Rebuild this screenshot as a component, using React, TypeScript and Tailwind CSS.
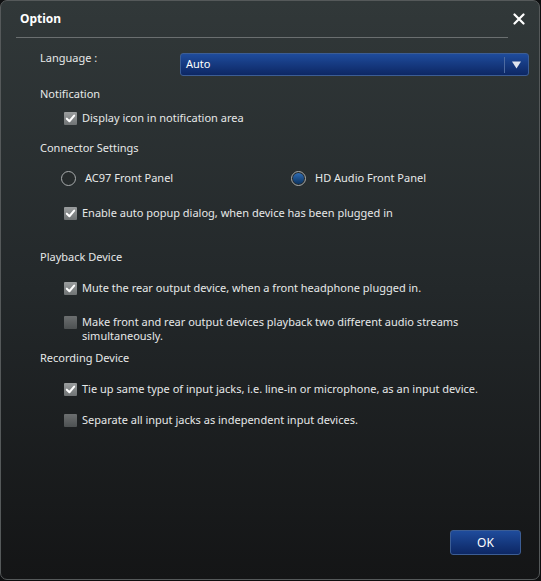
const font = { fontFamily: '"Noto Sans", "Open Sans", sans-serif' }

function Check({ checked }: { checked: boolean }) {
  return (
    <span
      className={`w-[13px] h-[13px] shrink-0 flex items-center justify-center rounded-[1px] ${
        checked ? 'bg-gradient-to-b from-[#9a9d9e] to-[#6f7374]' : 'bg-gradient-to-b from-[#6c6f70] to-[#4d5152]'
      }`}
    >
      {checked && (
        <svg viewBox="0 0 12 12" className="w-[11px] h-[11px]">
          <path d="M2 6.2 L4.8 9 L10 2.8" fill="none" stroke="#ffffff" strokeWidth={2.2} strokeLinecap="round" strokeLinejoin="round" />
        </svg>
      )}
    </span>
  )
}

function CheckRow({ checked, children, className = '' }: { checked: boolean; children: React.ReactNode; className?: string }) {
  return (
    <div className={`flex items-start gap-[5px] pl-[63px] ${className}`}>
      <div className="pt-[1px]">
        <Check checked={checked} />
      </div>
      <span className="leading-[14px] text-[#e6e8e8]">{children}</span>
    </div>
  )
}

function Radio({ checked, label }: { checked: boolean; label: string }) {
  return (
    <div className="flex items-center gap-[9px]">
      <span className="w-[15px] h-[15px] rounded-full border border-[#a8acad] bg-[#262b2c] flex items-center justify-center">
        {checked && <span className="w-[11px] h-[11px] rounded-full bg-gradient-to-b from-[#2f6db4] to-[#0c3360]" />}
      </span>
      <span className="text-[#e6e8e8]">{label}</span>
    </div>
  )
}

export default function App() {
  return (
    <div style={font} className="w-[541px] h-[581px] bg-[#0e0f10] text-[11px]">
      <div className="w-[540px] h-[580px] rounded-[7px] border border-[#55595a] bg-gradient-to-b from-[#313839] via-[#23282a] to-[#141516] flex flex-col">
        {/* Title */}
        <div className="flex items-center justify-between pl-[19px] pr-[14px] h-[36px]">
          <span className="font-bold text-white text-[12px]">Option</span>
          <svg viewBox="0 0 12 12" className="w-[12px] h-[12px]">
            <path d="M1.5 1.5 L10.5 10.5 M10.5 1.5 L1.5 10.5" stroke="#ffffff" strokeWidth={2.2} strokeLinecap="round" />
          </svg>
        </div>
        <div className="mx-[15px] mr-[31px] h-px bg-[#6a6f70]" />

        {/* Language */}
        <div className="flex items-center mt-[15px] pl-[39px] pr-[10px]">
          <span className="w-[140px] text-[#e6e8e8] -mt-[12px]">Language :</span>
          <div className="flex-1 h-[23px] rounded-[3px] border border-[#3c5d94] bg-gradient-to-b from-[#1f4c9c] to-[#0d2764] flex items-center">
            <span className="flex-1 pl-[5px] text-white">Auto</span>
            <span className="w-px h-[16px] bg-[#4d6aa0]" />
            <svg viewBox="0 0 10 8" className="w-[11px] h-[8px] mx-[6px]">
              <path d="M0.5 0.5 H9.5 L5 7.5 Z" fill="#dfe4ee" />
            </svg>
          </div>
        </div>

        <div className="pl-[39px] mt-[10px] text-[#e6e8e8]">Notification</div>
        <CheckRow checked className="mt-[8px]">Display icon in notification area</CheckRow>

        <div className="pl-[39px] mt-[15px] text-[#e6e8e8]">Connector Settings</div>
        <div className="flex pl-[60px] mt-[14px]">
          <div className="w-[230px]">
            <Radio checked={false} label="AC97 Front Panel" />
          </div>
          <Radio checked label="HD Audio Front Panel" />
        </div>
        <CheckRow checked className="mt-[19px]">Enable auto popup dialog, when device has been plugged in</CheckRow>

        <div className="pl-[39px] mt-[29px] text-[#e6e8e8]">Playback Device</div>
        <CheckRow checked className="mt-[16px]">Mute the rear output device, when a front headphone plugged in.</CheckRow>
        <CheckRow checked={false} className="mt-[20px] pr-[64px]">
          <span className="block max-w-[385px]">Make front and rear output devices playback two different audio streams simultaneously.</span>
        </CheckRow>

        <div className="pl-[39px] mt-[7px] text-[#e6e8e8]">Recording Device</div>
        <CheckRow checked className="mt-[15px]">Tie up same type of input jacks, i.e. line-in or microphone, as an input device.</CheckRow>
        <CheckRow checked={false} className="mt-[17px]">Separate all input jacks as independent input devices.</CheckRow>

        <div className="flex-1" />
        <div className="flex justify-end pr-[18px] pb-[24px]">
          <button className="w-[71px] h-[25px] rounded-[3px] border border-[#3c5d94] bg-gradient-to-b from-[#1f4c9c] to-[#0d2764] text-white text-[12px]">
            OK
          </button>
        </div>
      </div>
    </div>
  )
}
